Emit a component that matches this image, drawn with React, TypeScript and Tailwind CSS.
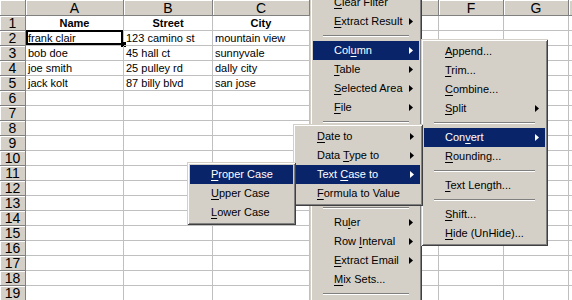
import React from "react";

type MenuItem =
  | { label: string; u?: number; arrow?: boolean; active?: boolean }
  | "sep"
  | "hidden";

const cols = ["A", "B", "C", "D", "E", "F", "G", ""];

const data: Record<number, string[]> = {
  1: ["Name", "Street", "City"],
  2: ["frank clair", "123 camino st", "mountain view"],
  3: ["bob doe", "45 hall ct", "sunnyvale"],
  4: ["joe smith", "25 pulley rd", "dally city"],
  5: ["jack kolt", "87 billy blvd", "san jose"],
};

// the part of the main menu under the Convert submenu is never visible
const mainMenu: MenuItem[] = [
  { label: "Clear Filter", u: 0 },
  { label: "Extract Result", u: 0, arrow: true },
  "sep",
  { label: "Column", u: 3, arrow: true, active: true },
  { label: "Table", u: 0, arrow: true },
  { label: "Selected Area", u: 0, arrow: true },
  { label: "File", u: 0, arrow: true },
  "sep",
  "hidden",
  "sep",
  { label: "Ruler", u: 2, arrow: true },
  { label: "Row Interval", u: 4, arrow: true },
  { label: "Extract Email", u: 0, arrow: true },
  { label: "Mix Sets...", u: 0 },
  "sep",
];

const columnMenu: MenuItem[] = [
  { label: "Append...", u: 0 },
  { label: "Trim...", u: 0 },
  { label: "Combine...", u: 0 },
  { label: "Split", u: 0, arrow: true },
  "sep",
  { label: "Convert", u: 3, arrow: true, active: true },
  { label: "Rounding...", u: 0 },
  "sep",
  { label: "Text Length...", u: 0 },
  "sep",
  { label: "Shift...", u: 0 },
  { label: "Hide (UnHide)...", u: 0 },
];

const convertMenu: MenuItem[] = [
  { label: "Date to", u: 0, arrow: true },
  { label: "Data Type to", u: 5, arrow: true },
  { label: "Text Case to", u: 5, arrow: true, active: true },
  { label: "Formula to Value", u: 0 },
];

const caseMenu: MenuItem[] = [
  { label: "Proper Case", u: 0, active: true },
  { label: "Upper Case", u: 0 },
  { label: "Lower Case", u: 0 },
];

function Label({ text, u }: { text: string; u?: number }) {
  if (u === undefined) return <span>{text}</span>;
  return (
    <span className="whitespace-pre">
      {text.slice(0, u)}
      <span className="underline underline-offset-[2px]">{text[u]}</span>
      {text.slice(u + 1)}
    </span>
  );
}

function Menu({ items, className }: { items: MenuItem[]; className: string }) {
  return (
    <div
      className={`absolute bg-[#d4d0c8] py-[3px] text-[11px] text-black shadow-[inset_1px_1px_0_#d4d0c8,inset_-1px_-1px_0_#404040,inset_2px_2px_0_#ffffff,inset_-2px_-2px_0_#808080] ${className}`}
      style={{ fontFamily: '"Liberation Sans", Arial, sans-serif' }}
    >
      {items.map((it, i) =>
        it === "sep" ? (
          <div key={i} className="h-[10px] pt-[4px] mx-[13px]">
            <div className="h-[2px] border-t border-[#808080] border-b border-b-white" />
          </div>
        ) : it === "hidden" ? (
          <div key={i} className="h-[76px]" />
        ) : (
          <div
            key={i}
            className={`relative h-[19px] mx-[3px] pl-[21px] flex items-center leading-none ${
              it.active ? "bg-[#0a246a] text-white" : ""
            }`}
          >
            <Label text={it.label} u={it.u} />
            {it.arrow && (
              <svg width="4" height="7" viewBox="0 0 4 7" className="absolute right-[6px] top-[6px]">
                <polygon points="0,0 4,3.5 0,7" fill={it.active ? "#ffffff" : "#000000"} />
              </svg>
            )}
          </div>
        )
      )}
    </div>
  );
}

export default function App() {
  const rows = Array.from({ length: 19 }, (_, i) => i + 1);

  return (
    <div
      className="relative w-[572px] h-[300px] overflow-hidden bg-white"
      style={{ fontFamily: '"Liberation Sans", Arial, sans-serif' }}
    >
      {/* sheet */}
      <div className="grid grid-cols-[26px_98px_89px_97px_64px_65px_65px_65px_60px]">
        <div className="h-[16px] bg-[#d4d0c8] border-r border-b border-[#808080] shadow-[inset_1px_1px_0_#ffffff]" />
        {cols.map((c, ci) => (
          <div
            key={ci}
            className="h-[16px] bg-[#d4d0c8] border-r border-b border-[#808080] shadow-[inset_1px_1px_0_#ffffff] flex items-center justify-center text-[14px] leading-none text-black"
          >
            {c}
          </div>
        ))}

        {rows.map((r) => (
          <React.Fragment key={r}>
            <div className="h-[15px] bg-[#d4d0c8] border-r border-b border-[#808080] shadow-[inset_1px_1px_0_#ffffff] flex items-center justify-center text-[14px] leading-none text-black">
              {r}
            </div>
            {cols.map((c, ci) => {
              const val = data[r]?.[ci];
              const selected = r === 2 && c === "A";
              return (
                <div
                  key={ci}
                  className={`relative h-[15px] border-r border-b border-[#c0c0c0] flex items-center px-[2px] text-[11px] leading-none text-black whitespace-nowrap ${
                    r === 1 ? "justify-center font-bold" : ""
                  }`}
                >
                  {val}
                  {selected && (
                    <>
                      <div className="absolute left-0 -top-px right-0 bottom-0 border-2 border-black" />
                      <div className="absolute -right-[3px] -bottom-[2px] w-[5px] h-[5px] bg-black" />
                    </>
                  )}
                </div>
              );
            })}
          </React.Fragment>
        ))}
      </div>

      {/* cascading menus */}
      <Menu items={mainMenu} className="left-[310px] top-[-10px] w-[112px]" />
      <Menu items={columnMenu} className="left-[421px] top-[39px] w-[127px]" />
      <Menu items={convertMenu} className="left-[293px] top-[124px] w-[130px]" />
      <Menu items={caseMenu} className="left-[187px] top-[162px] w-[109px]" />
    </div>
  );
}
